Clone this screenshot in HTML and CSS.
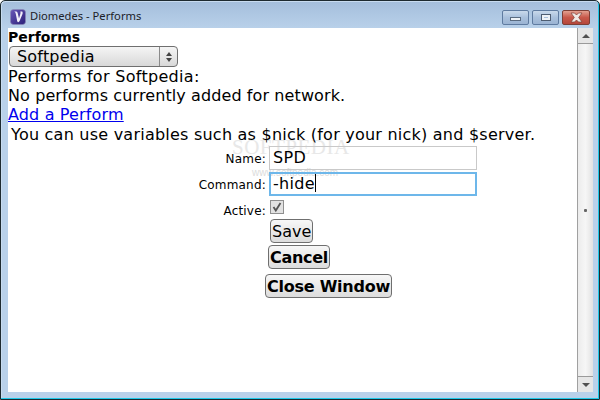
FILE: index.html
```html
<!DOCTYPE html>
<html lang="en">
<head>
<meta charset="utf-8">
<title>Diomedes - Performs</title>
<link rel="stylesheet" href="styles.css">
</head>
<body>
<div class="window">
  <div class="titlebar">
    <svg class="app-icon" width="16" height="16" viewBox="0 0 16 16"><defs><linearGradient id="ic" x1="0" y1="0" x2="1" y2="1"><stop offset="0" stop-color="#6a58b8"/><stop offset="1" stop-color="#2a1f78"/></linearGradient></defs><rect x="0.500" y="0.500" width="15" height="15" rx="3" fill="url(#ic)" stroke="#8d8ab5" stroke-width=".6"/><path d="M4 2.500c1 .3 1.500 1 1.800 2.500l1.400 7c.2.800.600 1.200 1 1.200.700 0 1.300-.8 1.800-2.200L12.500 5c.3-1.200.2-2-.3-2.500h-2c.4.600.4 1.300.1 2.500L9 9.500 7.800 4.500C7.500 3.300 7 2.700 6.300 2.500Z" fill="#f2eff9"/></svg>
    <span class="title">Diomedes - Performs</span>
    <div class="controls">
      <div class="ctl"><span class="min-glyph"></span></div>
      <div class="ctl"><span class="max-glyph"></span></div>
      <div class="ctl close"><svg width="15" height="11" viewBox="0 0 15 11"><path d="M2 1h3.500L7.500 3l2-2H13L9.700 5.500 13 10H9.500L7.500 8l-2 2H2l3.300-4.500Z" fill="#f0e8e4" stroke="#7d3f36" stroke-width=".7"/></svg></div>
    </div>
  </div>
  <div class="client">
    <main class="content">
      <div class="watermark" aria-hidden="true"><span class="wm-big">SOFTPEDIA</span><span class="wm-small">www.softpedia.com</span></div>
      <div class="heading">Performs</div>
      <div class="select"><span class="select-value">Softpedia</span><span class="spin"><i class="up"></i><i class="down"></i></span></div>
      <div class="line wide">Performs for Softpedia:</div>
      <div class="line slight">No performs currently added for network.</div>
      <a class="line link" href="#">Add a Perform</a>
      <div class="line note">You can use variables such as $nick (for your nick) and $server.</div>
      <div class="form">
        <label class="lbl">Name:</label><div class="input">SPD</div>
        <label class="lbl">Command:</label><div class="input focus">-hide<span class="caret"></span></div>
        <label class="lbl active-lbl">Active:</label><div class="check"><svg width="14" height="14" viewBox="0 0 14 14"><rect x=".5" y=".5" width="13" height="13" fill="#e2e2e2" stroke="#8f8f8f"/><path d="M3.500 7l2.300 3.500L10.500 3" fill="none" stroke="#555" stroke-width="1.800"/></svg></div>
      </div>
      <div class="buttons">
        <button class="btn save">Save</button>
        <button class="btn bold cancel">Cancel</button>
        <button class="btn bold closew">Close Window</button>
      </div>
    </main>
    <div class="scrollbar">
      <div class="arrow"><i class="tri-up"></i></div>
      <div class="thumb"><i class="grip"></i></div>
      <div class="arrow"><i class="tri-down"></i></div>
    </div>
  </div>
</div>
</body>
</html>
```
FILE: styles.css
```css
html, body { margin: 0; padding: 0; height: 100%; }
body { width: 600px; height: 400px; overflow: hidden; background: #fff; font-family: "DejaVu Sans", sans-serif; color: #000; }
.window {
  width: 600px; height: 400px; box-sizing: border-box;
  border: 1px solid #1d2a30;
  box-shadow: inset -1px -1px 0 #1ec8e8, inset 1px 1px 0 #c8dcf0;
  display: flex; flex-direction: column;
  background: linear-gradient(#a4bedc 0, #b9d1ea 28px, #b9d1ea 100%);
  border-radius: 5px 5px 0 0;
}
.titlebar { height: 27px; flex: none; display: flex; align-items: center; padding: 0 0 0 9px; box-sizing: border-box; }
.app-icon { flex: none; margin-top: 4px; }
.title { font: 11.200px "Noto Sans", sans-serif; margin: 2px 0 0 4px; color: #1c2128; }
.controls { margin-left: auto; margin-right: 9px; display: flex; gap: 3px; align-self: flex-start; margin-top: 9px; }
.ctl { width: 27px; height: 15px; box-sizing: border-box; border: 1px solid #5f7ba0; border-radius: 2px; background: linear-gradient(#c9d9eb 0, #a9c0dc 50%, #9bb4d3 100%); display: flex; align-items: center; justify-content: center; }
.ctl.close { width: 28px; background: linear-gradient(#e3a090 0, #c8584a 50%, #b5473b 100%); border-color: #7d3f36; }
.min-glyph { width: 9px; height: 2px; margin-top: 3px; background: #eef2f6; border: 1px solid #5a6b80; }
.max-glyph { width: 4px; height: 1px; border: 2px solid #eef2f6; outline: 1px solid #4e5d72; }
.client { flex: 1; display: flex; margin: 0 6px 7px 7px; background: #fff; min-height: 0; }
.content { flex: 1; padding: 1px 0 0 0; position: relative; font-size: 16px; line-height: 19px; min-width: 0; }
.watermark { position: absolute; left: 224px; top: 108px; display: flex; flex-direction: column; align-items: flex-start; z-index: 0; }
.wm-big { font: 21px/22px "Liberation Serif", serif; letter-spacing: .5px; color: #e8e8e8; white-space: nowrap; }
.wm-small { font: 10px/12px "Liberation Sans", sans-serif; color: #dcdcdc; white-space: nowrap; margin: 9px 0 0 20px; }
.heading, .select, .line, .form, .buttons { position: relative; }
.heading { font-weight: bold; font-size: 14px; line-height: 17px; }
.select { margin: 0 0 0 1px; width: 169px; height: 21px; box-sizing: border-box; border: 1px solid #6f6f6f; border-radius: 4px; background: linear-gradient(#f5f5f5, #d8d8d8); display: flex; align-items: center; }
.select-value { flex: 1; padding-left: 7px; font-size: 16px; letter-spacing: .2px; }
.spin { width: 17px; height: 100%; border-left: 1px solid #8a8a8a; display: flex; flex-direction: column; align-items: center; justify-content: center; gap: 2px; }
.up { border: 3px solid transparent; border-top: 0; border-bottom: 4px solid #444; }
.down { border: 3px solid transparent; border-bottom: 0; border-top: 4px solid #444; }
.line { display: block; white-space: nowrap; }
.wide { letter-spacing: .3px; }
.slight { letter-spacing: .1px; }
.link { color: #0000ee; text-decoration: underline; line-height: 20px; width: max-content; letter-spacing: .15px; }
.note { padding-left: 3px; letter-spacing: .23px; }
.form { display: grid; grid-template-columns: 258px 208px; column-gap: 3px; row-gap: 2px; margin-top: 2px; align-items: center; }
.lbl { justify-self: end; font-size: 12px; line-height: 14px; letter-spacing: .2px; padding-top: 1px; }
.input { height: 24px; box-sizing: border-box; border: 1px solid #c9c9c9; padding: 0 3px; font-size: 16px; line-height: 21px; letter-spacing: .3px; }
.input.focus { border: 2px solid #6db7ea; padding: 0 2px; line-height: 20px; }
.caret { display: inline-block; width: 1px; height: 18px; background: #000; vertical-align: -3px; }
.active-lbl { align-self: end; }
.check { height: 20px; padding-left: 1px; }
.check svg { display: block; margin-top: 2px; }
.buttons { display: flex; flex-direction: column; align-items: flex-start; padding-left: 257px; }
.btn { font: 16px/21px "DejaVu Sans", sans-serif; height: 24px; box-sizing: border-box; border: 1px solid #6f6f6f; border-radius: 4px; background: linear-gradient(#f7f7f7, #dcdcdc); padding: 0 1px; color: #000; }
.bold { font-weight: bold; }
.save { margin: 1px 0 0 5px; }
.cancel { margin: 2px 0 0 3px; letter-spacing: -.3px; }
.closew { margin: 5px 0 0 0; letter-spacing: -.25px; }
.scrollbar { width: 15px; flex: none; display: flex; flex-direction: column; background: #f0f0f0; border-left: 1px solid #a0a0a0; }
.arrow { height: 15px; flex: none; display: flex; align-items: center; justify-content: center; background: #e6e6e6; }
.tri-up { border: 4px solid transparent; border-top: 0; border-bottom: 4px solid #505050; }
.tri-down { border: 4px solid transparent; border-bottom: 0; border-top: 4px solid #505050; }
.thumb { flex: 1; display: flex; align-items: center; justify-content: center; background: linear-gradient(90deg, #ececec, #f6f6f6 50%, #e2e2e2); border-top: 1px solid #9a9a9a; border-bottom: 1px solid #9a9a9a; }
.grip { width: 3px; height: 3px; background: #666; border-radius: 1px; }
```
